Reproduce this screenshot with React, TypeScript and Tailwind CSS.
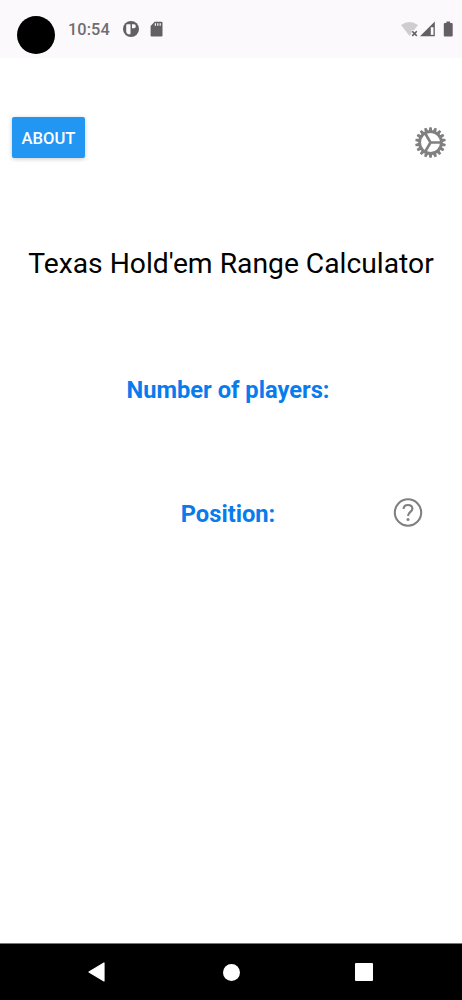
import React from "react";

function GearIcon() {
  const teeth = Array.from({ length: 18 }, (_, i) => i * 20 + 10);
  return (
    <svg className="size-8" viewBox="-15.5 -16.5 32 32" fill="none" stroke="#808080">
      <circle r="10.9" strokeWidth="2.8" />
      {teeth.map((a) => (
        <path key={a} d="M11.5 -1.8L15.3 -1.2V1.2L11.5 1.8Z" fill="#808080" stroke="none" transform={`rotate(${a})`} />
      ))}
      <path d="M0 0H11M0 0L-5.5 -9.5M0 0L-5.5 9.5" strokeWidth="2.6" />
    </svg>
  );
}

function HelpIcon() {
  return (
    <svg className="size-[30px]" viewBox="-15 -15.5 30 30" fill="none" stroke="#808080">
      <circle r="13.2" strokeWidth="2.1" />
      <path d="M-4.4 -3.4C-4.4 -6.2 -2.4 -7.5 0 -7.5C2.5 -7.5 4.4 -6 4.4 -3.7C4.4 -0.7 0 -0.5 0 3.4" strokeWidth="2.1" />
      <circle cy="7" r="1.5" fill="#808080" stroke="none" />
    </svg>
  );
}

function StatusBar() {
  return (
    <header className="flex h-[58px] shrink-0 items-start bg-[#fcf9fd] pl-[17px] pr-[8px]">
      <div className="mt-4 size-[38px] rounded-full bg-black" />
      <span className="ml-[13px] mt-[18px] w-[43px] whitespace-nowrap text-[16.3px] font-medium leading-6 tracking-[0.1px] text-[#6f6d71]">10:54</span>
      <svg className="ml-[12px] mt-[21px] size-4" viewBox="0 0 16 16">
        <circle cx="8" cy="8" r="8" fill="#626064" />
        <path d="M3.2 4.2Q3.2 3.2 4.2 3.2H7.5V13.2H5.2Q3.2 12.5 3.2 10.5ZM9 3.2H11Q12.8 3.2 12.8 5.2Q12.8 7.2 11 7.2H9Z" fill="#fcf9fd" />
      </svg>
      <svg className="ml-[11px] mt-[21px] h-4 w-[13px]" viewBox="0 0 13 16">
        <path d="M4.6 .8H11.5Q12.5 .8 12.5 1.8V14.2Q12.5 15.4 11.3 15.4H1.8Q.6 15.4 .6 14.2V5Z" fill="#626064" />
        <path d="M5.4 2.2V4.8M7.8 2.2V4.8M10.2 2.2V4.8" stroke="#fcf9fd" strokeWidth="1.2" />
      </svg>
      <svg className="ml-auto mt-[20px] h-[18px] w-[53px]" viewBox="0 0 53 18">
        <path d="M0 5Q8.5 -1 17 5L12.8 10.6L8.5 16Z" fill="#d0cdd1" />
        <rect x="10.5" y="10.2" width="6.5" height="7" fill="#fcf9fd" />
        <path d="M11.2 11.3L15.8 15.9M15.8 11.3L11.2 15.9" stroke="#626064" strokeWidth="1.6" />
        <path d="M19 16.3L33.8 1.4V16.3Z" fill="#626064" />
        <path d="M29.8 7.2H32.5V14.9H29.8Z" fill="#fcf9fd" />
        <path d="M45.4 1.5H49.1V3H50.7Q51.7 3 51.7 4V15.5Q51.7 16.5 50.7 16.5H43.8Q42.8 16.5 42.8 15.5V4Q42.8 3 43.8 3H45.4Z" fill="#626064" />
      </svg>
    </header>
  );
}

export default function App() {
  return (
    <div className="flex h-[1000px] w-[462px] flex-col overflow-hidden bg-white font-['Roboto',sans-serif]">
      <StatusBar />
      <main className="flex flex-1 flex-col">
        <div className="mt-[59px] flex items-start justify-between pl-3 pr-[15px]">
          <button className="flex h-[41px] w-[73px] items-center justify-center rounded-[2px] bg-[#2196f3] pt-[3px] text-[16.6px] font-medium text-white shadow-[0_1px_4px_rgba(0,0,0,0.22)]">
            ABOUT
          </button>
          <button className="mt-[9px]" aria-label="Settings"><GearIcon /></button>
        </div>
        <h1 className="mt-[86px] whitespace-nowrap text-center text-[28.25px] leading-10 text-black">Texas Hold'em Range Calculator</h1>
        <h2 className="mt-[90px] pr-[6px] text-center text-[23.7px] font-bold leading-8 text-[#087bed]">Number of players:</h2>
        <div className="mt-[91px] grid grid-cols-[1fr_auto_1fr] items-center pr-[6px]">
          <h2 className="col-start-2 text-[23.7px] font-bold leading-8 text-[#087bed]">Position:</h2>
          <button className="mb-[3px] mr-[33px] justify-self-end" aria-label="Help"><HelpIcon /></button>
        </div>
      </main>
      <nav className="flex h-[57px] shrink-0 items-center border-t border-[#777] bg-black pl-[88px] pr-[89px]">
        <svg className="h-5 w-[17px]" viewBox="0 0 17 20"><path d="M1 10L16 1V19Z" fill="white" stroke="white" strokeWidth="1.2" strokeLinejoin="round" /></svg>
        <div className="ml-[118px] size-[17px] rounded-full bg-white" />
        <div className="ml-auto size-[18px] rounded-[1px] bg-white" />
      </nav>
    </div>
  );
}
